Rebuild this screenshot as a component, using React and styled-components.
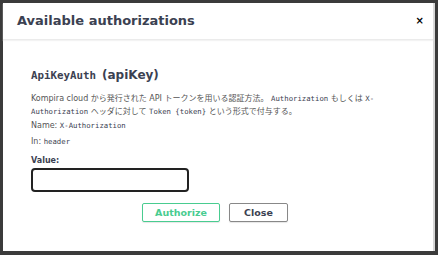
import React from "react";
import styled, { createGlobalStyle } from "styled-components";

const Global = createGlobalStyle`
  html, body { margin: 0; padding: 0; }
  body { width: 438px; height: 255px; background: #3a3a3a; overflow: hidden; }
`;

const Backdrop = styled.div`
  width: 438px;
  height: 255px;
  box-sizing: border-box;
  padding: 3px 3px 4px 3px;
  background: #3b3b3b;
  display: flex;
`;

const Modal = styled.div`
  flex: 1;
  background: #fff;
  border-right: 2px solid #d6d6d6;
  display: flex;
  flex-direction: column;
  font-family: "DejaVu Sans", "Noto Sans CJK JP", sans-serif;
  color: #3b4151;
`;

const Header = styled.div`
  height: 37px;
  box-sizing: border-box;
  display: flex;
  align-items: center;
  justify-content: space-between;
  padding: 0 9px 1px 14px;
  border-bottom: 1px solid #ebebeb;
  box-shadow: 0 1px 1px #f3f3f3;
`;

const Title = styled.h3`
  margin: 0;
  font-size: 13px;
  font-weight: 700;
  color: #3b4151;
`;

const CloseX = styled.button`
  border: 0;
  background: none;
  padding: 0;
  font: 700 10px "DejaVu Sans", sans-serif;
  color: #000;
  cursor: pointer;
`;

const Body = styled.div`
  padding: 28px 28px 0 28px;
  display: flex;
  flex-direction: column;
`;

const AuthTitle = styled.h4`
  margin: 0 0 10px 0;
  font-family: "DejaVu Sans", sans-serif;
  font-size: 12px;
  font-weight: 600;
  display: flex;
  align-items: baseline;
  gap: 6px;
  color: #3b4151;
`;

const Code = styled.code`
  font-family: "DejaVu Sans Mono", monospace;
  font-size: ${(p) => p.$size || 7.3}px;
  font-weight: ${(p) => p.$weight || 400};
  line-height: 1;
  color: #3b4151;
`;

const Para = styled.p`
  margin: 0 0 ${(p) => p.$mb ?? 3}px 0;
  font-family: "DejaVu Sans", "Noto Sans CJK JP", sans-serif;
  font-size: 8px;
  line-height: 13px;
  color: #555;
  max-width: 346px;
`;

const Label = styled.label`
  margin-top: 5px;
  font-size: 8px;
  font-weight: 700;
  color: #3b4151;
`;

const Input = styled.input`
  margin-top: 3px;
  width: 158px;
  height: 24px;
  box-sizing: border-box;
  border: 2px solid #222;
  border-radius: 4px;
  outline: none;
`;

const Buttons = styled.div`
  display: flex;
  justify-content: center;
  gap: 9px;
  margin-top: 11px;
  padding-right: 6px;
`;

const Button = styled.button`
  height: 19px;
  width: ${(p) => p.$w}px;
  box-sizing: border-box;
  background: #fff;
  border: 1px solid ${(p) => (p.$primary ? "#49cc90" : "#888")};
  border-radius: 2px;
  color: ${(p) => (p.$primary ? "#49cc90" : "#3b4151")};
  font: 700 9.5px "DejaVu Sans", sans-serif;
  padding: 0;
  box-shadow: 0 1px 1px rgba(0,0,0,0.1);
`;

export default function App() {
  return (
    <>
      <Global />
      <Backdrop>
        <Modal>
          <Header>
            <Title>Available authorizations</Title>
            <CloseX>×</CloseX>
          </Header>
          <Body>
            <AuthTitle>
              <Code $size={10.8} $weight={600}>ApiKeyAuth</Code>
              <span>(apiKey)</span>
            </AuthTitle>
            <Para $mb={1}>
              Kompira cloud から発行された API トークンを用いる認証方法。 <Code>Authorization</Code> もしくは <Code>X-Authorization</Code> ヘッダに対して <Code>Token {"{token}"}</Code> という形式で付与する。
            </Para>
            <Para>Name: <Code>X-Authorization</Code></Para>
            <Para>In: <Code>header</Code></Para>
            <Label>Value:</Label>
            <Input />
            <Buttons>
              <Button $primary $w={78}>Authorize</Button>
              <Button $w={59}>Close</Button>
            </Buttons>
          </Body>
        </Modal>
      </Backdrop>
    </>
  );
}
